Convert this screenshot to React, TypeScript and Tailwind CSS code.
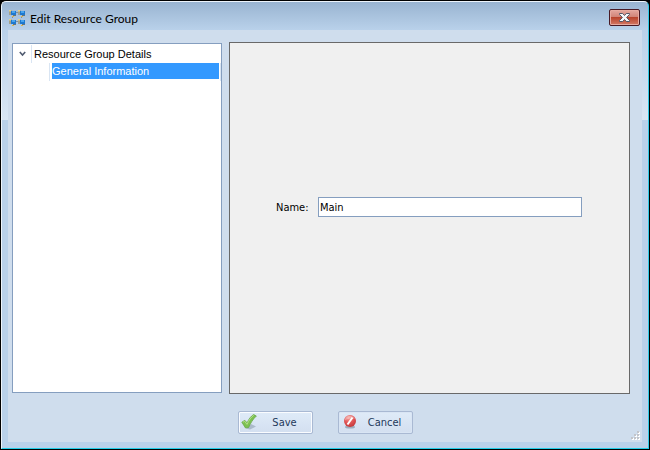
import React, { useState } from 'react';

const ResourceIcon: React.FC = () => (
  <svg width="17" height="17" viewBox="0 0 17 17" aria-hidden="true">
    <path d="M8 3.5h2M8 12.5h2M4.5 7v2M13.5 7v2" stroke="#7d8f9f" strokeWidth="1" fill="none" />
    {[[1, 0], [10, 0], [1, 9], [10, 9]].map(([x, y]) => (
      <g key={`${x}-${y}`} transform={`translate(${x} ${y})`}>
        <path d="M0 1h2.500v5H0z" fill="#a3a18c" />
        <path d="M0 1h2v1.500H0z" fill="#e6d28a" />
        <path d="M2 2h5v4H2z" fill="#1e79cf" />
        <path d="M3 2h3v2H3z" fill="#4aa5ee" />
        <path d="M4 6h3v1H4z" fill="#68747c" />
        <path d="M3 7h2v1H3z" fill="#dcb64a" />
      </g>
    ))}
  </svg>
);

const CloseIcon: React.FC = () => (
  <svg width="13" height="11" viewBox="0 0 13 11" aria-hidden="true">
    <path
      d="M1.5 1.5h3.2l1.8 2 1.8-2h3.2v1L8.6 5.5l2.9 3v1H8.3l-1.8-2-1.8 2H1.5v-1l2.9-3-2.9-3z"
      fill="#f4f6f9"
      stroke="#535666"
      strokeWidth="1"
    />
  </svg>
);

const CheckIcon: React.FC = () => (
  <svg width="17" height="17" viewBox="0 0 17 17" aria-hidden="true">
    <path d="M5 14.5 10 10l5 2.500-6 3z" fill="#7f92a4" opacity=".5" />
    <path
      d="M.8 8.200 3.800 6.300l2.300 2.500C7.800 5 9.800 2.300 12.600.5l2.800 1.500C12 5 9.700 9 7.600 13.500L4.500 14z"
      fill="#7cc152"
      stroke="#63a544"
      strokeWidth=".7"
    />
    <path d="M1.900 8.300 3.600 7.200l2.400 3.200C7.800 6.300 10 3.100 12.800 1.300" fill="none" stroke="#b4df88" strokeWidth="1" />
  </svg>
);

const CancelIcon: React.FC = () => (
  <svg width="17" height="17" viewBox="0 0 17 17" aria-hidden="true">
    <defs>
      <radialGradient id="cancel-ball" cx=".4" cy=".25" r=".75">
        <stop offset="0" stopColor="#f3a09b" />
        <stop offset=".5" stopColor="#e4595a" />
        <stop offset="1" stopColor="#c53a3c" />
      </radialGradient>
    </defs>
    <ellipse cx="9" cy="13" rx="5" ry="1.500" fill="#77889a" opacity=".6" />
    <circle cx="9" cy="7" r="6" fill="url(#cancel-ball)" />
    <path d="M4 5a5.500 5.500 0 0 1 10 0C11 4 7 4.500 4 6.500z" fill="#fff" opacity=".3" />
    <path d="M11.500 3.500 6.500 10.500" stroke="#fff" strokeWidth="2" />
  </svg>
);

interface DialogButtonProps {
  icon: React.ReactNode;
  label: string;
  primary?: boolean;
}

const DialogButton: React.FC<DialogButtonProps> = ({ icon, label, primary }) => (
  <button
    type="button"
    className={`flex h-[23px] w-[75px] items-center rounded-[2px] border border-[#a9b9d3] bg-gradient-to-b from-[#dfebf8] to-[#d3dff0] pl-[2px] text-[#1e395b] ${
      primary ? 'shadow-[inset_0_0_0_1px_#fafcff]' : 'shadow-[inset_0_0_0_1px_#d9e5f4]'
    }`}
  >
    {icon}
    <span className="flex-1 pt-[2px] text-center">{label}</span>
  </button>
);

const ResourceTree: React.FC = () => (
  <nav className="mt-px w-[210px] shrink-0 border border-[#859ebf] bg-white pt-px font-['Liberation_Sans',Arial,sans-serif] text-[11px] leading-[17px]">
    <ul>
      <li>
        <div className="flex h-[18px] items-center">
          <button type="button" aria-label="Collapse" className="flex w-[18px] justify-center">
            <svg width="7" height="6" viewBox="0 0 7 6" aria-hidden="true">
              <path d="m.8 1 2.700 3L6.200 1" fill="none" stroke="#505b70" strokeWidth="1.600" />
            </svg>
          </button>
          <span className="h-full border-l border-[#d9e5f3] pt-px pl-[2px]">Resource Group Details</span>
        </div>
        <ul>
          <li className="ml-9 flex h-[18px] border-x border-[#d9e5f3] pr-px pl-[2px]">
            <a href="#general" className="h-4 flex-1 bg-[#3399ff] text-white">
              General Information
            </a>
          </li>
        </ul>
      </li>
    </ul>
  </nav>
);

const App: React.FC = () => {
  const [name, setName] = useState('Main');

  return (
    <div className="h-screen bg-black p-px font-['DejaVu_Sans_Condensed',Tahoma,sans-serif] text-[11px]">
      <div className="flex h-full flex-col rounded-t-[5px] border border-t-[#edf4fb] border-r-[#31cbe8] border-b-[#21cde8] border-l-[#edf4fb] bg-[linear-gradient(#99b4d1_0px,#b9d1ea_28px,#d9e6f4_118px,#b9d1ea_118px)] px-[6px] pb-[6px]">
        <header className="flex h-7 shrink-0 items-center pt-[3px]">
          <ResourceIcon />
          <h1 className="flex-1 pt-[2px] pl-[5px] font-['Lato','Segoe_UI',sans-serif] text-[12px] leading-[17px] text-black">
            Edit Resource Group
          </h1>
          <button
            type="button"
            aria-label="Close"
            className="mr-[2px] flex h-[17px] w-[31px] items-center justify-center rounded-[2px] border border-[#481a25] bg-[linear-gradient(#e5a89f,#d18478_45%,#b9442d_50%,#d37a65)] shadow-[inset_0_0_0_1px_#e7aaa0]"
          >
            <CloseIcon />
          </button>
        </header>
        <main className="flex min-h-0 flex-1 flex-col bg-[#cfdded] pt-3 pl-1">
          <div className="mr-3 flex min-h-0 flex-1 gap-[7px]">
            <div className="flex pb-px">
              <ResourceTree />
            </div>
            <section className="flex flex-1 items-center border border-[#696969] bg-[#f0f0f0] pr-[47px] pb-[22px] pl-[46px]">
              <label htmlFor="group-name" className="w-[42px] pt-[2px]">
                Name:
              </label>
              <input
                id="group-name"
                value={name}
                onChange={(e) => setName(e.target.value)}
                className="h-5 min-w-0 flex-1 border border-[#859ebf] bg-white px-px outline-none"
              />
            </section>
          </div>
          <footer className="relative flex h-12 shrink-0 justify-center gap-[25px] pt-[17px] pr-1">
            <DialogButton icon={<CheckIcon />} label="Save" primary />
            <DialogButton icon={<CancelIcon />} label="Cancel" />
            <svg className="absolute right-[2px] bottom-[2px]" width="9" height="9" viewBox="0 0 9 9" aria-hidden="true">
              {[[6, 0], [3, 3], [6, 3], [0, 6], [3, 6], [6, 6]].map(([x, y]) => (
                <g key={`${x}-${y}`}>
                  <path d={`M${x + 1} ${y + 1}h2v2h-2z`} fill="#fff" />
                  <path d={`M${x} ${y}h2v2h-2z`} fill="#c2c4ca" />
                </g>
              ))}
            </svg>
          </footer>
        </main>
      </div>
    </div>
  );
};

export default App;
